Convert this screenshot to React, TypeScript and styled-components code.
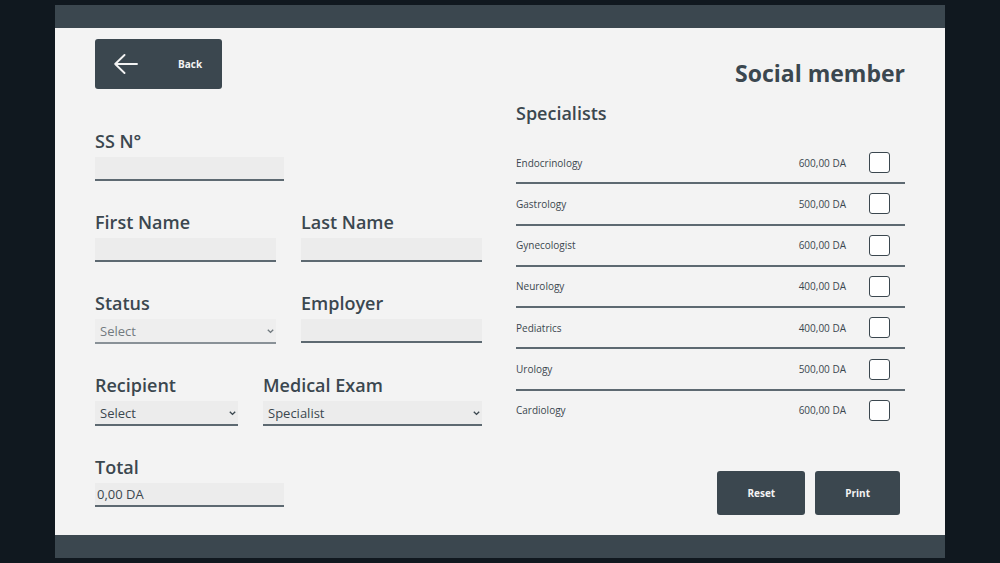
import React, { useState } from "react";
import type { ReactNode } from "react";
import styled, { createGlobalStyle } from "styled-components";

const slate = "#3b474f";
const rule = "#5d6971";

const GlobalStyle = createGlobalStyle`
  *, *::before, *::after { box-sizing: border-box; }
  body {
    margin: 0;
    background: #10181f;
    color: ${slate};
    font-family: "Open Sans", "Noto Sans", sans-serif;
  }
  button, input, select { font-family: inherit; color: inherit; }
`;

const Page = styled.div`
  min-height: 100vh;
  padding: 5px 55px;
  display: flex;
  flex-direction: column;
`;

const Bar = styled.div`
  height: 23px;
  background: ${slate};
`;

const Panel = styled.main`
  flex: 1;
  display: grid;
  grid-template-columns: 387fr 389fr;
  column-gap: 34px;
  padding: 11px 40px 20px;
  background: #f3f3f3;
`;

const Column = styled.div`
  display: flex;
  flex-direction: column;
`;

const Button = styled.button`
  height: 44px;
  padding: 0 30px;
  border: 0;
  border-radius: 3px;
  background: ${slate};
  color: #f3f3f3;
  font-size: 10px;
  font-weight: 700;
  cursor: pointer;
`;

const BackButton = styled(Button)`
  align-self: flex-start;
  display: flex;
  align-items: center;
  gap: 40px;
  height: 50px;
  padding: 0 20px 0 19px;
`;

const Form = styled.form`
  display: flex;
  flex-direction: column;
  gap: 27px;
  margin-top: 38px;
`;

const Row = styled.div<{ $columns: string }>`
  display: grid;
  grid-template-columns: ${(p) => p.$columns};
  column-gap: 25px;
  align-items: start;
`;

const Field = styled.div`
  display: flex;
  flex-direction: column;
  gap: 1px;
`;

const Label = styled.label`
  font-size: 18px;
  line-height: 29px;
  font-weight: 600;
`;

const Input = styled.input`
  width: 100%;
  height: 24px;
  padding: 0 2px;
  border: 0;
  border-bottom: 2px solid ${rule};
  border-radius: 0;
  background: #ececec;
  font-size: 13px;
`;

const SelectBox = styled.div<{ $disabled?: boolean }>`
  position: relative;
  opacity: ${(p) => (p.$disabled ? 0.7 : 1)};
`;

const SelectControl = styled.select`
  appearance: none;
  display: block;
  width: 100%;
  height: 25px;
  padding: 0 5px;
  border: 0;
  border-bottom: 2px solid ${rule};
  border-radius: 0;
  background: #ececec;
  font-size: 13px;
  &:disabled { opacity: 1; }
`;

const Chevron = styled.svg`
  position: absolute;
  right: 2px;
  top: 10px;
  pointer-events: none;
`;

const Title = styled.h1`
  margin: 18px 0 0;
  font-size: 23px;
  line-height: 32px;
  font-weight: 700;
  text-align: right;
`;

const Heading = styled.h2`
  margin: 12px 0 0;
  font-size: 18px;
  line-height: 25px;
  font-weight: 600;
`;

const PriceTable = styled.table`
  width: 100%;
  height: 289px;
  margin-top: 17px;
  border-spacing: 0;
  font-size: 10px;
  td, th {
    padding: 0;
    font-weight: 400;
    text-align: left;
    border-bottom: 2px solid ${rule};
  }
  tr:last-child > * { border-bottom-color: transparent; }
  td:nth-child(2) { text-align: right; }
  td:last-child { width: 59px; }
`;

const Check = styled.input`
  appearance: none;
  display: block;
  width: 21px;
  height: 21px;
  margin: 0 0 0 23px;
  border: 1px solid ${slate};
  border-radius: 3px;
  background: #fff;
  &:checked { background: ${slate}; box-shadow: inset 0 0 0 3px #fff; }
`;

const Actions = styled.div`
  display: flex;
  justify-content: flex-end;
  gap: 10px;
  margin-top: auto;
  padding-right: 5px;
`;

const specialists = [
  { name: "Endocrinology", price: 600 },
  { name: "Gastrology", price: 500 },
  { name: "Gynecologist", price: 600 },
  { name: "Neurology", price: 400 },
  { name: "Pediatrics", price: 400 },
  { name: "Urology", price: 500 },
  { name: "Cardiology", price: 600 },
];

const money = (n: number) => `${n},00 DA`;

function Select({ id, disabled, children }: { id: string; disabled?: boolean; children: ReactNode }) {
  return (
    <SelectBox $disabled={disabled}>
      <SelectControl id={id} disabled={disabled}>
        {children}
      </SelectControl>
      <Chevron width="7" height="5" viewBox="0 0 7 5" fill="none" stroke="currentColor" strokeWidth="1.4" aria-hidden="true">
        <path d="M0.8 0.8L3.5 3.4L6.2 0.8" />
      </Chevron>
    </SelectBox>
  );
}

export default function App() {
  const [chosen, setChosen] = useState<string[]>([]);
  const total = specialists
    .filter((s) => chosen.includes(s.name))
    .reduce((sum, s) => sum + s.price, 0);
  const toggle = (name: string) =>
    setChosen((c) => (c.includes(name) ? c.filter((n) => n !== name) : [...c, name]));

  return (
    <>
      <GlobalStyle />
      <Page>
        <Bar />
        <Panel>
          <Column>
            <BackButton type="button">
              <svg width="24" height="20" viewBox="0 0 24 20" fill="none" stroke="currentColor" strokeWidth="1.9" strokeLinecap="round" strokeLinejoin="round" aria-hidden="true">
                <path d="M23 10H1.2M10.5 1L1.2 10l9.3 9" />
              </svg>
              Back
            </BackButton>
            <Form id="member">
              <Row $columns="189fr 173fr">
                <Field>
                  <Label htmlFor="ssn">SS N°</Label>
                  <Input id="ssn" />
                </Field>
              </Row>
              <Row $columns="1fr 1fr">
                <Field>
                  <Label htmlFor="first">First Name</Label>
                  <Input id="first" />
                </Field>
                <Field>
                  <Label htmlFor="last">Last Name</Label>
                  <Input id="last" />
                </Field>
              </Row>
              <Row $columns="1fr 1fr">
                <Field>
                  <Label htmlFor="status">Status</Label>
                  <Select id="status" disabled>
                    <option>Select</option>
                  </Select>
                </Field>
                <Field>
                  <Label htmlFor="employer">Employer</Label>
                  <Input id="employer" />
                </Field>
              </Row>
              <Row $columns="143fr 219fr">
                <Field>
                  <Label htmlFor="recipient">Recipient</Label>
                  <Select id="recipient">
                    <option>Select</option>
                  </Select>
                </Field>
                <Field>
                  <Label htmlFor="exam">Medical Exam</Label>
                  <Select id="exam">
                    <option>Specialist</option>
                  </Select>
                </Field>
              </Row>
              <Row $columns="189fr 173fr">
                <Field>
                  <Label htmlFor="total">Total</Label>
                  <Input id="total" readOnly value={money(total)} />
                </Field>
              </Row>
            </Form>
          </Column>
          <Column>
            <Title>Social member</Title>
            <Heading>Specialists</Heading>
            <PriceTable>
              <tbody>
                {specialists.map((s) => (
                  <tr key={s.name}>
                    <th scope="row">
                      <label htmlFor={s.name}>{s.name}</label>
                    </th>
                    <td>{money(s.price)}</td>
                    <td>
                      <Check
                        type="checkbox"
                        id={s.name}
                        checked={chosen.includes(s.name)}
                        onChange={() => toggle(s.name)}
                      />
                    </td>
                  </tr>
                ))}
              </tbody>
            </PriceTable>
            <Actions>
              <Button type="reset" form="member" onClick={() => setChosen([])}>
                Reset
              </Button>
              <Button type="button" onClick={() => window.print()}>
                Print
              </Button>
            </Actions>
          </Column>
        </Panel>
        <Bar />
      </Page>
    </>
  );
}
